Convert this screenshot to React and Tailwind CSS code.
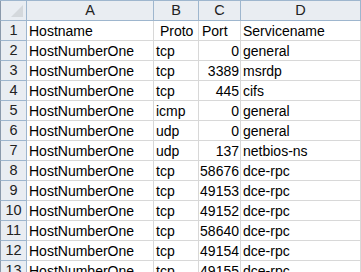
import React from "react";

const rows = [
  ["Hostname", " Proto", "Port", "Servicename", true],
  ["HostNumberOne", "tcp", "0", "general"],
  ["HostNumberOne", "tcp", "3389", "msrdp"],
  ["HostNumberOne", "tcp", "445", "cifs"],
  ["HostNumberOne", "icmp", "0", "general"],
  ["HostNumberOne", "udp", "0", "general"],
  ["HostNumberOne", "udp", "137", "netbios-ns"],
  ["HostNumberOne", "tcp", "58676", "dce-rpc"],
  ["HostNumberOne", "tcp", "49153", "dce-rpc"],
  ["HostNumberOne", "tcp", "49152", "dce-rpc"],
  ["HostNumberOne", "tcp", "58640", "dce-rpc"],
  ["HostNumberOne", "tcp", "49154", "dce-rpc"],
  ["HostNumberOne", "tcp", "49155", "dce-rpc"],
];

export default function App() {
  return (
    <div
      className="w-[361px] h-[272px] overflow-hidden bg-white text-[14px] text-black"
      style={{ fontFamily: '"Liberation Sans", Arial, sans-serif' }}
    >
      <div className="flex h-[21px] border-t border-[#9eb6ce] bg-[#e9edf2] text-[#222] text-[14.5px]">
        <div className="relative w-[27px] shrink-0 border-r border-b border-l border-[#9eb6ce] border-l-[#8a99ab]">
          <div className="absolute right-[3px] bottom-[3px] w-0 h-0 border-l-[12px] border-l-transparent border-b-[12px] border-b-[#d4d8dc]" />
        </div>
        <div className="w-[127px] shrink-0 border-r border-b border-[#9eb6ce] flex items-center justify-center">A</div>
        <div className="w-[45px] shrink-0 border-r border-b border-[#9eb6ce] flex items-center justify-center">B</div>
        <div className="w-[42px] shrink-0 border-r border-b border-[#9eb6ce] flex items-center justify-center">C</div>
        <div className="w-[120px] shrink-0 border-r border-b border-[#9eb6ce] flex items-center justify-center">D</div>
        <div className="flex-1 border-b border-[#9eb6ce]" />
      </div>
      {rows.map((r, i) => (
        <div key={i} className="flex h-[20px] leading-[20px]">
          <div className="w-[27px] shrink-0 bg-[#e9edf2] border-r border-b border-l border-[#9eb6ce] border-l-[#8a99ab] text-center text-[#222] text-[14.5px] leading-[19px]">
            {i + 1}
          </div>
          <div className="w-[127px] shrink-0 border-r border-b border-[#d8d8d8] pl-[2px] whitespace-pre">{r[0]}</div>
          <div className="w-[45px] shrink-0 border-r border-b border-[#d8d8d8] pl-[2px] whitespace-pre">{r[1]}</div>
          <div className={`w-[42px] shrink-0 border-r border-b border-[#d8d8d8] whitespace-pre ${r[4] ? "pl-[3px]" : "text-right pr-[1px]"}`}>{r[2]}</div>
          <div className="w-[120px] shrink-0 border-r border-b border-[#d8d8d8] pl-[2px] whitespace-pre">{r[3]}</div>
          <div className="flex-1 border-b border-[#d8d8d8]" />
        </div>
      ))}
    </div>
  );
}
